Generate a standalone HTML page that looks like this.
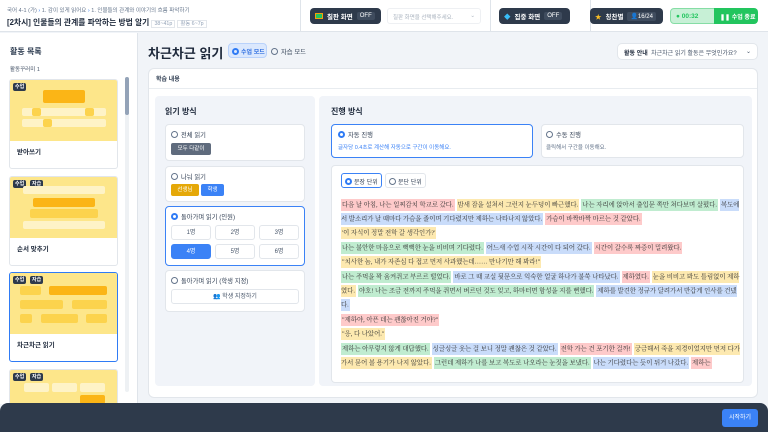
<!DOCTYPE html>
<html><head><meta charset="utf-8"><style>
*{box-sizing:border-box;margin:0;padding:0;white-space:nowrap}
body{width:768px;height:432px;overflow:hidden;background:#f1f4f8;font-family:"Liberation Sans","Noto Sans CJK KR",sans-serif;color:#1e293b;position:relative}
.a{position:absolute}
.hdr{left:0;top:0;width:768px;height:32px;background:#fff;border-bottom:1px solid #dfe4ea}
.vd{top:0;width:1px;height:32px;background:#dfe4ea}
.dk{background:#2e3a4b;color:#fff;border-radius:4px;font-size:6.5px;font-weight:bold;display:flex;align-items:center;padding:0 5px;gap:4px}
.off{background:#3f4c5e;border-radius:2px;padding:1px 3px;font-weight:normal;font-size:6px}
.side{left:0;top:33px;width:138px;height:371px;background:#fff;border-right:1px solid #dfe4ea}
.card{left:9px;width:109px;border:1px solid #e2e6eb;border-radius:3px;background:#fff;overflow:hidden}
.ct{height:61px;background:#fde68a;position:relative}
.cl{position:absolute;left:7px;top:66px;font-size:6.5px;font-weight:bold}
.tag{position:absolute;top:3px;background:#2e3a4b;color:#fff;font-size:5px;padding:1px 2px;border-radius:2px;font-weight:bold;line-height:6px}
.r{position:absolute;border-radius:2px}
.box{background:#fff;border:1px solid #e2e6eb;border-radius:4px}
.rad{display:inline-block;width:7px;height:7px;border:1px solid #64748b;border-radius:50%;vertical-align:-1px;margin-right:3px}
.rad.on{border:2px solid #2f7bf5}
.t7{font-size:6.3px;color:#334155}
.btn{font-size:6px;border:1px solid #e2e6eb;border-radius:3px;text-align:center;background:#fff;color:#475569}
.txt{font-family:"Liberation Serif","Noto Serif CJK KR","Noto Serif CJK SC",serif;font-size:6.4px;line-height:14.4px;color:#333;white-space:normal}
.txt span{padding:2.5px 1px;margin-right:2px;white-space:normal}
.R{background:#fecaca}.Y{background:#fde9b0}.G{background:#c0ecd0}.B{background:#c9dcfa}
</style></head><body>
<div class="a hdr"></div>
<div class="a" style="left:7px;top:6px;font-size:5.5px;color:#64748b">국어 4-1 (가) <span style="color:#2f7bf5">›</span> 1. 감이 있게 읽어요 <span style="color:#2f7bf5">›</span> 1. 인물들의 관계와 이야기의 흐름 파악하기</div>
<div class="a" style="left:7px;top:17px;font-size:7.8px;font-weight:bold;color:#1e293b">[2차시] 인물들의 관계를 파악하는 방법 알기 <span style="font-size:5.3px;font-weight:normal;color:#94a3b8;border:1px solid #e2e6eb;padding:0 2px">38~41p</span> <span style="font-size:5.3px;font-weight:normal;color:#94a3b8;border:1px solid #e2e6eb;padding:0 2px">활동 6~7p</span></div>
<div class="a vd" style="left:300px"></div><div class="a vd" style="left:490px"></div><div class="a vd" style="left:590px"></div>
<div class="a dk" style="left:310px;top:8px;width:71px;height:16px"><span style="display:inline-block;width:8px;height:6px;background:#22c55e;border:1px solid #f59e0b"></span>칠판 화면 <span class="off">OFF</span></div>
<div class="a" style="left:387px;top:8px;width:94px;height:16px;border:1px solid #eef0f3;border-radius:3px;font-size:5.5px;color:#aab3bf;padding:4px 5px">칠판 화면을 선택해주세요. <span style="float:right">⌄</span></div>
<div class="a dk" style="left:499px;top:8px;width:71px;height:16px"><span style="color:#38bdf8">◆</span>집중 화면 <span class="off">OFF</span></div>
<div class="a dk" style="left:590px;top:8px;width:73px;height:16px"><span style="color:#fbbf24">★</span>칭찬별 <span class="off">👤16/24</span></div>
<div class="a" style="left:670px;top:8px;width:45px;height:16px;background:#c7f0d6;border:1px solid #86dda5;border-radius:4px 0 0 4px;color:#22c55e;font-size:6.5px;font-weight:bold;padding:4px 5px">● 00:32</div>
<div class="a" style="left:714px;top:8px;width:44px;height:16px;background:#22c55e;border-radius:0 4px 4px 0;color:#fff;font-size:6px;font-weight:bold;padding:4px 6px">❚❚ 수업 종료</div>

<div class="a side"></div>
<div class="a" style="left:10px;top:46px;font-size:8px;font-weight:bold;color:#334155">활동 목록</div>
<div class="a" style="left:10px;top:65px;font-size:5.5px;color:#475569">활동꾸러미 1</div>
<div class="a" style="left:125px;top:77px;width:4px;height:315px;background:#eef1f4;border-radius:2px"></div>
<div class="a" style="left:125px;top:77px;width:4px;height:38px;background:#94a3b8;border-radius:2px"></div>

<div class="a card" style="top:79px;height:90px"><div class="ct"><span class="tag" style="left:3px">수업</span>
<div class="r" style="left:33px;top:10px;width:42px;height:13px;background:#fbb516"></div>
<div class="r" style="left:12px;top:28px;width:84px;height:8px;background:#fef3c7"></div>
<div class="r" style="left:22px;top:28px;width:9px;height:8px;background:#fcd34d"></div>
<div class="r" style="left:75px;top:28px;width:9px;height:8px;background:#fcd34d"></div>
<div class="r" style="left:12px;top:39px;width:84px;height:8px;background:#fef3c7"></div>
<div class="r" style="left:33px;top:39px;width:9px;height:8px;background:#fcd34d"></div>
</div><div class="cl">받아쓰기</div></div>

<div class="a card" style="top:176px;height:90px"><div class="ct"><span class="tag" style="left:3px">수업</span><span class="tag" style="left:20px">자습</span>
<div class="r" style="left:13px;top:9px;width:82px;height:8px;background:#fef3c7"></div>
<div class="r" style="left:23px;top:21px;width:62px;height:9px;background:#fbb516"></div>
<div class="r" style="left:20px;top:32px;width:68px;height:9px;background:#fcd34d"></div>
<div class="r" style="left:13px;top:44px;width:82px;height:8px;background:#fef3c7"></div>
</div><div class="cl">순서 맞추기</div></div>

<div class="a card" style="top:272px;height:90px;border:1.5px solid #2f7bf5"><div class="ct"><span class="tag" style="left:3px">수업</span><span class="tag" style="left:20px">자습</span>
<div class="r" style="left:10px;top:13px;width:21px;height:9px;background:#fcd34d"></div>
<div class="r" style="left:39px;top:13px;width:58px;height:9px;background:#fbb516"></div>
<div class="r" style="left:10px;top:27px;width:43px;height:9px;background:#fcd34d"></div>
<div class="r" style="left:62px;top:27px;width:35px;height:9px;background:#fcd34d"></div>
<div class="r" style="left:10px;top:41px;width:12px;height:9px;background:#fcd34d"></div>
<div class="r" style="left:31px;top:41px;width:37px;height:9px;background:#fcd34d"></div>
<div class="r" style="left:76px;top:41px;width:21px;height:9px;background:#fcd34d"></div>
</div><div class="cl">차근차근 읽기</div></div>

<div class="a card" style="top:369px;height:40px"><div class="ct"><span class="tag" style="left:3px">수업</span><span class="tag" style="left:20px">자습</span>
<div class="r" style="left:14px;top:13px;width:25px;height:9px;background:#fef3c7"></div>
<div class="r" style="left:42px;top:13px;width:25px;height:9px;background:#fef3c7"></div>
<div class="r" style="left:70px;top:13px;width:25px;height:9px;background:#fef3c7"></div>
<div class="r" style="left:70px;top:25px;width:25px;height:9px;background:#fbb516"></div>
</div></div>

<div class="a" style="left:148px;top:43px;font-size:13px;font-weight:bold;color:#1e293b">차근차근 읽기</div>
<div class="a" style="left:228px;top:43px;width:39px;height:15px;background:#dbe8fd;border:1px solid #b9d2fb;border-radius:4px;font-size:6px;color:#2f6fe0;padding:3px 3px;font-weight:bold"><span class="rad on" style="margin-right:2px"></span>수업 모드</div>
<div class="a" style="left:271px;top:47px;font-size:6.3px;color:#334155"><span class="rad"></span>자습 모드</div>
<div class="a" style="left:617px;top:43px;width:141px;height:17px;background:#fff;border:1px solid #e2e6eb;border-radius:5px;font-size:6px;padding:4px 6px;color:#475569"><b style="color:#1e293b">활동 안내</b>&nbsp; 차근차근 읽기 활동은 무엇인가요? <span style="float:right">⌄</span></div>

<div class="a" style="left:148px;top:68px;width:610px;height:330px;background:#fff;border:1px solid #e2e6eb;border-radius:6px"></div>
<div class="a" style="left:149px;top:88px;width:608px;height:1px;background:#e8ecf0"></div>
<div class="a" style="left:156px;top:74px;font-size:6px;font-weight:bold;color:#334155">학습 내용</div>

<div class="a" style="left:155px;top:96px;width:160px;height:290px;background:#f1f4f9;border-radius:4px"></div>
<div class="a" style="left:165px;top:106px;font-size:8px;font-weight:bold">읽기 방식</div>
<div class="a box" style="left:165px;top:124px;width:140px;height:37px"></div>
<div class="a t7" style="left:171px;top:130px"><span class="rad"></span>전체 읽기</div>
<div class="a" style="left:171px;top:143px;width:40px;height:12px;background:#5f6b7d;color:#fff;font-size:5.5px;text-align:center;line-height:12px;border-radius:2px">모두 다같이</div>
<div class="a box" style="left:165px;top:166px;width:140px;height:36px"></div>
<div class="a t7" style="left:171px;top:172px"><span class="rad"></span>나눠 읽기</div>
<div class="a" style="left:171px;top:184px;width:28px;height:12px;background:#e5a808;color:#fff;font-size:5.5px;text-align:center;line-height:12px;border-radius:2px">선생님</div>
<div class="a" style="left:201px;top:184px;width:23px;height:12px;background:#3b82f6;color:#fff;font-size:5.5px;text-align:center;line-height:12px;border-radius:2px">학생</div>
<div class="a box" style="left:165px;top:206px;width:140px;height:60px;border-color:#3b82f6"></div>
<div class="a t7" style="left:171px;top:212px"><span class="rad on"></span>돌아가며 읽기 (인원)</div>
<div class="a btn" style="left:171px;top:225px;width:40px;height:15px;line-height:14px">1명</div>
<div class="a btn" style="left:215px;top:225px;width:40px;height:15px;line-height:14px">2명</div>
<div class="a btn" style="left:259px;top:225px;width:40px;height:15px;line-height:14px">3명</div>
<div class="a btn" style="left:171px;top:244px;width:40px;height:15px;line-height:14px;background:#3b82f6;color:#fff;border-color:#3b82f6">4명</div>
<div class="a btn" style="left:215px;top:244px;width:40px;height:15px;line-height:14px">5명</div>
<div class="a btn" style="left:259px;top:244px;width:40px;height:15px;line-height:14px">6명</div>
<div class="a box" style="left:165px;top:270px;width:140px;height:42px"></div>
<div class="a t7" style="left:171px;top:276px"><span class="rad"></span>돌아가며 읽기 (학생 지정)</div>
<div class="a btn" style="left:171px;top:289px;width:128px;height:15px;line-height:14px">👥 학생 지정하기</div>

<div class="a" style="left:319px;top:96px;width:433px;height:290px;background:#f1f4f9;border-radius:4px"></div>
<div class="a" style="left:331px;top:106px;font-size:8px;font-weight:bold">진행 방식</div>
<div class="a box" style="left:331px;top:124px;width:202px;height:34px;border-color:#3b82f6"></div>
<div class="a t7" style="left:338px;top:130px"><span class="rad on"></span>자동 진행</div>
<div class="a" style="left:338px;top:143px;font-size:5.5px;color:#3b82f6">글자당 0.4초로 계산해 자동으로 구간이 이동해요.</div>
<div class="a box" style="left:541px;top:124px;width:203px;height:34px"></div>
<div class="a t7" style="left:546px;top:130px"><span class="rad"></span>수동 진행</div>
<div class="a" style="left:546px;top:143px;font-size:5.5px;color:#64748b">클릭해서 구간을 이동해요.</div>
<div class="a box" style="left:331px;top:165px;width:413px;height:218px"></div>
<div class="a" style="left:341px;top:173px;width:41px;height:15px;border:1px solid #3b82f6;border-radius:3px;font-size:6px;padding:3px 3px;color:#334155;background:#fff"><span class="rad on" style="margin-right:2px"></span>문장 단위</div>
<div class="a" style="left:385px;top:173px;width:41px;height:15px;border:1px solid #e2e6eb;border-radius:3px;font-size:6px;padding:3px 3px;color:#334155;background:#fff"><span class="rad" style="margin-right:2px"></span>문단 단위</div>
<div class="a txt" style="left:341px;top:198px;width:400px;height:176px;overflow:hidden">
<span class="R">다음 날 아침, 나는 일찌감치 학교로 갔다.</span><span class="Y">밤새 잠을 설쳐서 그런지 눈두덩이 빠근했다.</span><span class="G">나는 자리에 앉아서 출입문 쪽만 쳐다보며 살폈다.</span><span class="B">복도에서 발소리가 날 때마다 가슴을 졸이며 기다렸지만 제하는 나타나지 않았다.</span><span class="R">가슴이 바짝바짝 마르는 것 같았다.</span><br>
<span class="Y">'이 자식이 정말 전학 갈 생각인가?'</span><br>
<span class="G">나는 불안한 마음으로 뻑뻑한 눈을 비비며 기다렸다.</span><span class="B">어느새 수업 시작 시간이 다 되어 갔다.</span><span class="R">시간이 갈수록 짜증이 밀려왔다.</span><br>
<span class="Y">"치사한 놈, 내가 자존심 다 접고 먼저 사과했는데…… 만나기만 해 봐라!"</span><br>
<span class="G">나는 주먹을 꽉 움켜쥐고 부르르 떨었다.</span><span class="B">바로 그 때 교실 뒷문으로 익숙한 얼굴 하나가 불쑥 나타났다.</span><span class="R">제하였다.</span><span class="Y">눈을 비비고 봐도 틀림없이 제하였다.</span><span class="G">야호! 나는 조금 전까지 주먹을 쥐면서 벼르던 것도 잊고, 하마터면 함성을 지를 뻔했다.</span><span class="B">제하를 발견한 정규가 달려가서 반갑게 인사를 건넸다.</span><br>
<span class="R">"제하야, 아픈 데는 괜찮아진 거야?"</span><br>
<span class="Y">"응, 다 나았어."</span><br>
<span class="G">제하는 아무렇지 않게 대답했다.</span><span class="B">싱글싱글 웃는 걸 보니 정말 괜찮은 것 같았다.</span><span class="R">전학 가는 건 포기한 걸까!</span><span class="Y">궁금해서 죽을 지경이었지만 먼저 다가가서 묻어 볼 용기가 나지 않았다.</span><span class="G">그런데 제하가 나를 보고 복도로 나오라는 눈짓을 보냈다.</span><span class="B">나는 기다렸다는 듯이 뒤거 나갔다.</span><span class="R">제하는</span>
</div>

<div class="a" style="left:0;top:403px;width:768px;height:29px;background:#2e3a4b;border-radius:8px 8px 0 0"></div>
<div class="a" style="left:722px;top:409px;width:36px;height:18px;background:#3b82f6;border-radius:3px;color:#fff;font-size:6px;text-align:center;line-height:18px">시작하기</div>
</body></html>
